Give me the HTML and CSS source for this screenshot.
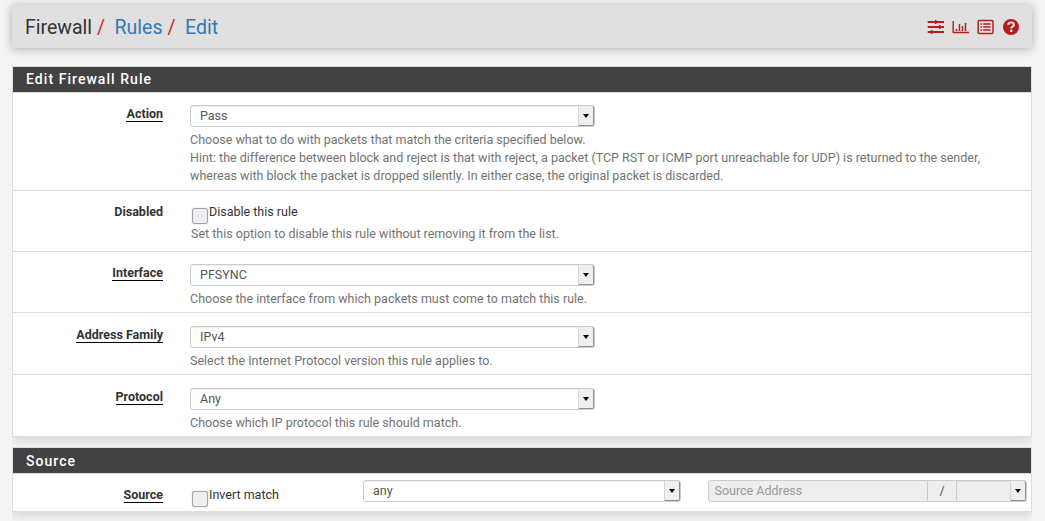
FILE: index.html
```html
<!DOCTYPE html>
<html lang="en">
<head>
<meta charset="utf-8">
<title>Firewall: Rules: Edit</title>
<link rel="stylesheet" href="styles.css">
</head>
<body>
<header class="page-header">
  <nav class="breadcrumb"><span>Firewall</span><i>/</i><a>Rules</a><i>/</i><a>Edit</a></nav>
  <div class="icons">
    <svg width="18" height="16" viewBox="0 0 18 16"><path d="M0.700 3h16.300M0.700 8h16.300M0.700 13h16.300" stroke-width="2"/><path d="M8.700 1v4M12.700 6v4M4.700 11v4" stroke-width="1.600"/></svg>
    <svg width="18" height="16" viewBox="0 0 18 16"><path d="M1.200 2v11.500H17" stroke-width="1.4"/><path d="M4.500 10V12M7.500 5V12M10.500 7V12M13.500 4V12" stroke-width="1.500"/></svg>
    <svg width="18" height="16" viewBox="0 0 18 16"><rect x="1.2" y="1.600" width="14.800" height="12.800" rx="1" stroke-width="1.5"/><path d="M3.500 5h1.600M3.500 8h1.600M3.500 11h1.600M6.200 5H13.500M6.200 8H13.500M6.200 11H13.500" stroke-width="1.500"/></svg>
    <svg width="18" height="16" viewBox="0 0 18 16"><circle class="disc" cx="9" cy="8" r="8"/><path class="mark" d="M6.200 5.900C6.400 4.300 7.500 3.500 9 3.500c1.700 0 2.900 1 2.900 2.300C11.900 7.700 9.200 7.600 9.200 9.500" stroke-width="2.200"/><path class="mark" d="M9.200 10.700v2.300" stroke-width="2.400"/></svg>
  </div>
</header>

<section class="panel">
  <h2>Edit Firewall Rule</h2>
  <div class="row action">
    <div class="label"><span class="req">Action</span></div>
    <div class="field">
      <div class="select"><span>Pass</span><b></b></div>
      <p class="help">Choose what to do with packets that match the criteria specified below.<br>Hint: the difference between block and reject is that with reject, a packet (TCP RST or ICMP port unreachable for UDP) is returned to the sender,<br>whereas with block the packet is dropped silently. In either case, the original packet is discarded.</p>
    </div>
  </div>
  <div class="row disabled">
    <div class="label"><span>Disabled</span></div>
    <div class="field">
      <label class="check"><i></i>Disable this rule</label>
      <p class="help">Set this option to disable this rule without removing it from the list.</p>
    </div>
  </div>
  <div class="row interface">
    <div class="label"><span class="req">Interface</span></div>
    <div class="field">
      <div class="select"><span>PFSYNC</span><b></b></div>
      <p class="help">Choose the interface from which packets must come to match this rule.</p>
    </div>
  </div>
  <div class="row family">
    <div class="label"><span class="req">Address Family</span></div>
    <div class="field">
      <div class="select"><span>IPv4</span><b></b></div>
      <p class="help">Select the Internet Protocol version this rule applies to.</p>
    </div>
  </div>
  <div class="row protocol">
    <div class="label"><span class="req">Protocol</span></div>
    <div class="field">
      <div class="select"><span>Any</span><b></b></div>
      <p class="help">Choose which IP protocol this rule should match.</p>
    </div>
  </div>
</section>

<section class="panel">
  <h2>Source</h2>
  <div class="row source">
    <div class="label"><span class="req">Source</span></div>
    <label class="check"><i></i>Invert match</label>
    <div class="select"><span>any</span><b></b></div>
    <div class="group">
      <div class="address">Source Address</div>
      <div class="slash">/</div>
      <div class="select mask"><span></span><b></b></div>
    </div>
  </div>
</section>
</body>
</html>
```
FILE: styles.css
```css
* { box-sizing: border-box; }
body {
  margin: 0;
  padding: 5px 13px 0 12px;
  height: 521px;
  overflow: hidden;
  background: #f4f4f4;
  color: #333;
  font: 12.51px/18px Roboto, sans-serif;
}
.page-header {
  display: flex;
  justify-content: space-between;
  align-items: center;
  height: 43px;
  padding: 0 12px 0 13px;
  background: #e0e0e0;
  border-radius: 2px;
  box-shadow: 0 1px 10px rgba(0, 0, 0, .3);
}
.breadcrumb { padding-top: 2px; font-size: 19.5px; line-height: 24px; }
.breadcrumb a { color: #337ab7; }
.breadcrumb i { font-style: normal; color: #c62828; margin: 0 9.5px 0 5px; }
.icons { display: flex; gap: 7px; }
.icons svg { display: block; fill: none; stroke: #b71c1c; }
.icons .disc { fill: #b71c1c; stroke: none; }
.icons .mark { stroke: #e0e0e0; }

.panel {
  margin-top: 18px;
  background: #fff;
  border: 1px solid #ddd;
  box-shadow: 0 4px 10px rgba(0, 0, 0, .12);
  clip-path: inset(0 0 -16px 0);
}
.panel + .panel { margin-top: 10px; }
h2 {
  margin: 0;
  height: 26px;
  padding-left: 13px;
  background: #424242;
  border-bottom: 1px solid #ddd;
  color: #fff;
  font-size: 14px;
  font-weight: 500;
  line-height: 24px;
  letter-spacing: 1.05px;
}
.panel + .panel h2 { line-height: 26px; }
.row { display: flex; border-bottom: 1px solid #ddd; }
.row:last-child { border-bottom: 0; }
.action { height: 98px; padding-top: 12px; }
.disabled { height: 61px; padding-top: 12px; }
.interface { height: 61px; padding-top: 12px; }
.family { height: 62px; padding-top: 13px; }
.protocol { height: 61px; padding-top: 13px; }
.source { height: 37px; padding-top: 6px; }
.label {
  width: 150px;
  margin-right: 27px;
  text-align: right;
  font-weight: 700;
}
.label span { display: inline-block; height: 17px; }
.label .req { border-bottom: 1px solid #000; }
.help { margin: 4px 0 0; color: #737373; white-space: nowrap; }
.select {
  display: flex;
  justify-content: space-between;
  width: 405px;
  height: 22px;
  border: 1px solid #ccc;
  border-radius: 3px;
  background: #fff;
  box-shadow: inset 0 1px 1px rgba(0, 0, 0, .075);
  color: #555;
  line-height: 20px;
}
.select span { padding-left: 9px; }
.select b {
  display: flex;
  align-items: center;
  justify-content: center;
  width: 16px;
  background: #efeff1;
  border: solid #909090;
  border-width: 0 1px 1px 0;
  border-left: 1px solid #d4d4d4;
  border-radius: 0 2px 2px 0;
}
.select b::after {
  content: "";
  border: 3px solid transparent;
  border-top: 4px solid #000;
  border-bottom: 0;
}
.check { display: flex; height: 18px; }
.check i {
  width: 16px;
  height: 16px;
  margin: 5px 1px 0 2px;
  border: 1px solid #a4a4a8;
  border-radius: 3px;
  background: #efeff1;
  box-shadow: 0 0 1px #999;
}
.disabled .help { margin-left: 1px; }
.source .label, .source .check { margin-top: 6px; }
.source .label span { height: 17px; }
.source .check { width: 173px; }
.source > .select { width: 318px; margin-right: 27px; }
.group { display: flex; height: 22px; }
.address {
  width: 220px;
  padding-left: 5.500px;
  background: #eee;
  border: 1px solid #ccc;
  border-radius: 3px 0 0 3px;
  color: #999;
  line-height: 20px;
}
.slash {
  width: 28px;
  background: #eee;
  border: solid #ccc;
  border-width: 1px 0;
  text-align: center;
  line-height: 20px;
  color: #555;
}
.group .mask { width: 71px; background: #eee; border-radius: 0 3px 3px 0; }
```
